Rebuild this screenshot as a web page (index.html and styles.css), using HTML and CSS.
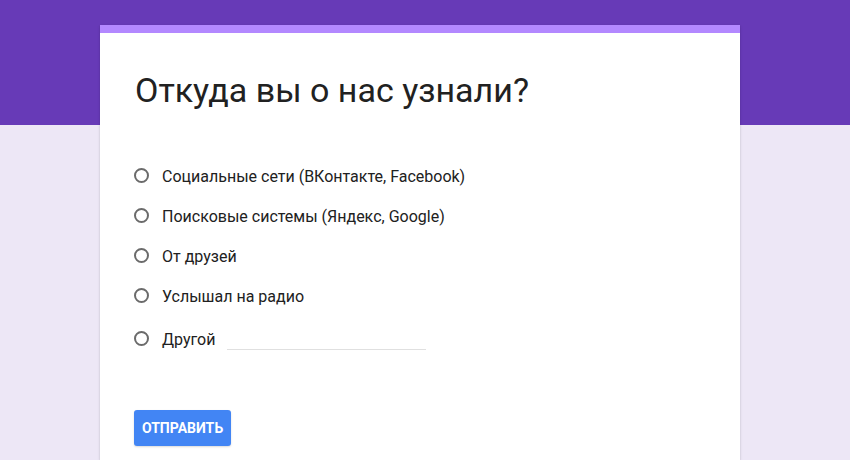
FILE: index.html
```html
<!DOCTYPE html>
<html lang="ru">
<head>
<meta charset="utf-8">
<title>Откуда вы о нас узнали?</title>
<link rel="stylesheet" href="styles.css">
</head>
<body>
<div class="page">
  <form class="card">
    <h1 class="title">Откуда вы о нас узнали?</h1>
    <div class="options">
      <label class="option"><span class="radio"></span><span class="label">Социальные сети (ВКонтакте, Facebook)</span></label>
      <label class="option"><span class="radio"></span><span class="label">Поисковые системы (Яндекс, Google)</span></label>
      <label class="option"><span class="radio"></span><span class="label">От друзей</span></label>
      <label class="option"><span class="radio"></span><span class="label">Услышал на радио</span></label>
      <label class="option option-other"><span class="radio"></span><span class="label">Другой</span><span class="other-input"></span></label>
    </div>
    <button type="button" class="submit">Отправить</button>
  </form>
</div>
</body>
</html>
```

FILE: styles.css
```css
html, body {
  margin: 0;
  padding: 0;
}
body {
  font-family: Roboto, "Liberation Sans", sans-serif;
  background: #ede7f6;
  overflow: hidden;
}
.page {
  height: 460px;
  background: linear-gradient(to bottom, #673ab7 0, #673ab7 125px, #ede7f6 125px);
  padding-top: 25px;
  box-sizing: border-box;
}
.card {
  margin-left: 100px;
  width: 640px;
  height: 435px;
  background: #fff;
  border-top: 8px solid #b388ff;
  box-sizing: border-box;
  padding: 37px 35px 0 34px;
  box-shadow: 0 2px 1px -1px rgba(0,0,0,.2), 0 1px 1px 0 rgba(0,0,0,.14), 0 1px 3px 0 rgba(0,0,0,.12);
}
.title {
  margin: 0;
  font-size: 34px;
  line-height: 40px;
  font-weight: 400;
  color: #212121;
  padding-left: 1px;
}
.options {
  margin-top: 48px;
  display: flex;
  flex-direction: column;
}
.option {
  display: flex;
  align-items: flex-start;
  height: 40px;
  font-size: 16px;
  line-height: 38px;
  color: #212121;
}
.option-other {
  margin-top: 3px;
  height: 44px;
}
.radio {
  box-sizing: border-box;
  width: 15px;
  height: 15px;
  margin-top: 10px;
  border: 2px solid #6b6b6b;
  border-radius: 50%;
  flex: none;
  margin-right: 13px;
}
.label {
  white-space: nowrap;
}
.other-input {
  display: block;
  width: 199px;
  height: 28px;
  margin-left: 12px;
  border-bottom: 1px solid #e0e0e0;
}
.submit {
  margin-top: 45px;
  height: 36px;
  padding: 0 8px;
  background: #4285f4;
  color: #fff;
  border: none;
  border-radius: 3px;
  font-family: Roboto, "Liberation Sans", sans-serif;
  font-size: 14px;
  font-weight: 700;
  text-transform: uppercase;
  letter-spacing: 0;
  box-shadow: 0 1px 2px rgba(0,0,0,.15);
}
```
